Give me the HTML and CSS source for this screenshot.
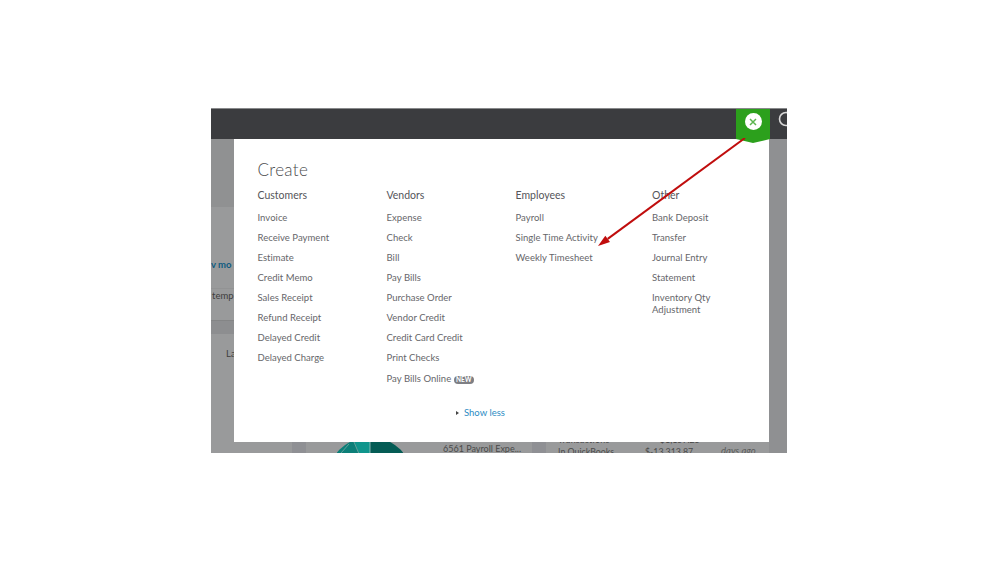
FILE: index.html
```html
<!DOCTYPE html>
<html lang="en">
<head>
<meta charset="utf-8">
<title>Create menu</title>
<link rel="stylesheet" href="styles.css">
</head>
<body>
<div class="app">
  <header class="topbar">
    <div class="create-tab">
      <span class="close-btn">
        <svg width="10" height="10" viewBox="0 0 10 10"><path d="M2 2l6 6M8 2l-6 6" stroke="#5cb54f" stroke-width="1.5" fill="none"/></svg>
      </span>
    </div>
    <svg class="search-icon" width="10" height="18" viewBox="0 0 10 18"><circle cx="9" cy="9" r="6.5" fill="none" stroke="#d8d8d8" stroke-width="1.6"/></svg>
  </header>
  <div class="backdrop">
    <div class="band-top"></div>
    <span class="frag frag-more">v mo</span>
    <span class="frag frag-temp">temp</span>
    <div class="thin-line"></div>
    <div class="band-line"></div>
    <span class="frag frag-la">La</span>
    <svg class="pie" width="66" height="11" viewBox="0 0 66 11">
      <path d="M33 38V-5A43 43 0 0 1 76 38Z" fill="#055c55"/>
      <path d="M33 38V-5A43 43 0 0 0 -10 38Z" fill="#0c7f78"/>
      <path d="M33 38L33 -5L17 -5L17.5 0Z" fill="#10958c"/>
      <path d="M33 38L17 0M4 11L12 2" stroke="#7aa9a5" stroke-width=".8" fill="none"/>
      <path d="M33 0V11" stroke="#a5c4c1" stroke-width=".8" fill="none"/>
    </svg>
    <span class="frag frag-payroll">6561 Payroll Expe...</span>
    <span class="frag frag-over-a">Transactions</span>
    <span class="frag frag-over-b">$1,157.25</span>
    <span class="frag frag-qb">In QuickBooks</span>
    <span class="frag frag-amt">$-13,313.87</span>
    <span class="frag frag-days">days ago</span>
    <div class="col-shade shade-a"></div>
    <div class="col-shade shade-b"></div>
    <div class="right-strip"></div>
  </div>
  <section class="modal">
    <h1 class="modal-title">Create</h1>
    <div class="columns">
      <div class="col col-customers">
        <h2>Customers</h2>
        <ul>
          <li>Invoice</li><li>Receive Payment</li><li>Estimate</li><li>Credit Memo</li>
          <li>Sales Receipt</li><li>Refund Receipt</li><li>Delayed Credit</li><li>Delayed Charge</li>
        </ul>
      </div>
      <div class="col col-vendors">
        <h2>Vendors</h2>
        <ul>
          <li>Expense</li><li>Check</li><li>Bill</li><li>Pay Bills</li>
          <li>Purchase Order</li><li>Vendor Credit</li><li>Credit Card Credit</li><li>Print Checks</li>
          <li class="item-online">Pay Bills Online <span class="badge">NEW</span></li>
        </ul>
      </div>
      <div class="col col-employees">
        <h2>Employees</h2>
        <ul>
          <li>Payroll</li><li>Single Time Activity</li><li>Weekly Timesheet</li>
        </ul>
      </div>
      <div class="col col-other">
        <h2>Other</h2>
        <ul>
          <li>Bank Deposit</li><li>Transfer</li><li>Journal Entry</li><li>Statement</li>
          <li>Inventory Qty<br>Adjustment</li>
        </ul>
      </div>
    </div>
    <div class="show-less"><span class="caret"></span><span class="show-link">Show less</span></div>
  </section>
  <svg class="arrow" width="160" height="120" viewBox="0 0 160 120">
    <path d="M148 0L10.7 100.9" stroke="#c00d0d" stroke-width="2" fill="none"/>
    <path d="M1 108L8.3 97.7L13 104.1Z" fill="#c00d0d"/>
  </svg>
</div>
</body>
</html>
```
FILE: styles.css
```css
* { box-sizing: border-box; }
html, body { margin: 0; padding: 0; background: #fff; }
body { width: 999px; height: 562px; overflow: hidden; font-family: "Lato", "Liberation Sans", sans-serif; padding: 108px 0 0 211px; }
.app { position: relative; width: 576px; height: 345px; display: flex; flex-direction: column; overflow: hidden; border-top: 1px solid #88898b; }
.topbar { position: relative; z-index: 2; height: 30px; flex: none; background: #3b3c3f; display: flex; justify-content: flex-end; gap: 7px; }
.create-tab { position: relative; width: 34px; height: 30px; background: #2ca01c; display: flex; justify-content: center; padding-top: 4px; }
.create-tab::after { content: ""; position: absolute; left: 0; top: 30px; border-style: solid; border-width: 4px 17px 0 17px; border-color: #2ca01c transparent transparent transparent; }
.close-btn { width: 17px; height: 17px; border-radius: 50%; background: #fff; display: flex; align-items: center; justify-content: center; }
.search-icon { flex: none; margin-top: 1px; }
.backdrop { position: relative; flex: 1; background: #999a9b; }
.band-top { height: 68px; background: #909192; }
.thin-line { position: absolute; left: 0; top: 149px; width: 23px; height: 1px; background: #929394; }
.band-line { position: absolute; left: 0; top: 181px; width: 23px; height: 14px; background: #8d8e90; border-top: 1px solid #848586; }
.frag { position: absolute; font-size: 9.5px; color: #3d3d3d; white-space: nowrap; }
.frag-more { left: 0; top: 120px; color: #0f5a80; font-weight: 700; }
.frag-temp { left: 1px; top: 151px; }
.frag-la { left: 15px; top: 209px; }
.frag-payroll { left: 232px; top: 304px; font-size: 9px; color: #4a4a4a; }
.frag-over-a { left: 347px; top: 295px; font-size: 8.8px; letter-spacing: .3px; color: #444; }
.frag-over-b { left: 449px; top: 295px; font-size: 8.8px; color: #444; }
.frag-qb { left: 347px; top: 307px; font-size: 8.8px; color: #4a4a4a; }
.frag-amt { left: 434px; top: 307px; font-size: 8.8px; color: #4a4a4a; }
.frag-days { left: 510px; top: 306px; font-style: italic; color: #5a5a5a; }
.pie { position: absolute; left: 126px; top: 303px; }
.col-shade { position: absolute; top: 303px; width: 14px; height: 11px; background: #8f9094; }
.shade-a { left: 81px; }
.shade-b { left: 321px; }
.right-strip { position: absolute; right: 0; top: 0; bottom: 0; width: 18px; background: #8f9092; }
.modal { position: absolute; z-index: 1; left: 23px; top: 30px; width: 535px; height: 303px; background: #fff; padding: 22px 0 0 23.5px; }
.modal-title { margin: 0; font-size: 17px; line-height: 18px; font-weight: 300; color: #4b4b4d; letter-spacing: .35px; }
.columns { display: grid; grid-template-columns: 129px 129px 136.5px 1fr; margin-top: 9px; }
.col h2 { margin: 0 0 9.5px; font-size: 10.5px; line-height: 14px; font-weight: 400; color: #55555a; }
.col ul { list-style: none; margin: 0; padding: 0; }
.col li { font-size: 9.5px; line-height: 12px; margin-bottom: 8px; color: #66666a; letter-spacing: .03px; white-space: nowrap; }
.col .item-online { margin-top: 9px; }
.badge { display: inline-block; vertical-align: 0; width: 20px; height: 8px; line-height: 8px; text-align: center; border-radius: 4px; background: #7e7f84; color: #fff; font-size: 6.5px; font-weight: 700; letter-spacing: 0; }
.show-less { position: absolute; left: 222px; top: 268px; display: flex; align-items: center; gap: 5px; font-size: 9.5px; line-height: 12px; color: #2b8cc4; }
.caret { width: 0; height: 0; border-style: solid; border-width: 2.5px 0 2.5px 3px; border-color: transparent transparent transparent #444; }
.arrow { position: absolute; z-index: 3; left: 386px; top: 29px; }
```
